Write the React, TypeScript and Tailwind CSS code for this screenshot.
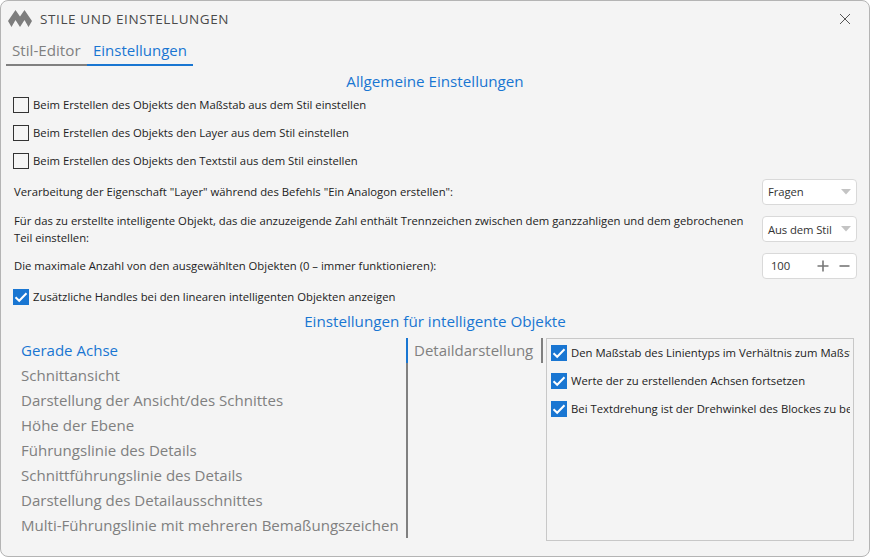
import React from "react";

const font = { fontFamily: '"Open Sans", "Noto Sans", sans-serif' };

function Check({ on, text }: { on?: boolean; text: string }) {
  return (
    <div className="flex items-center gap-[4px] h-[28px]">
      {on ? (
        <svg width="16" height="16" viewBox="0 0 16 16" className="shrink-0">
          <rect width="16" height="16" fill="#1976d2" />
          <path d="M2.5 8.2 L6.2 11.8 L13.5 4.2" fill="none" stroke="#fff" strokeWidth="2" />
        </svg>
      ) : (
        <div className="w-[16px] h-[16px] shrink-0 border border-[#333] bg-[#f5f5f5]" />
      )}
      <span className="text-[11.3px] text-[#222] whitespace-nowrap">{text}</span>
    </div>
  );
}

function Field({ children }: { children: React.ReactNode }) {
  return (
    <div className="w-[95px] h-[26px] shrink-0 bg-white border border-[#d9d9d9] rounded-[4px] flex items-center justify-between pl-[5px] pr-[5px] text-[11.3px] text-[#333] tracking-[-0.1px]">
      {children}
    </div>
  );
}

const Arrow = () => (
  <svg width="10" height="6" viewBox="0 0 10 6" className="shrink-0">
    <path d="M0 0 H10 L5 5.5 Z" fill="#c4c4c4" />
  </svg>
);

const list = [
  "Gerade Achse",
  "Schnittansicht",
  "Darstellung der Ansicht/des Schnittes",
  "Höhe der Ebene",
  "Führungslinie des Details",
  "Schnittführungslinie des Details",
  "Darstellung des Detailausschnittes",
  "Multi-Führungslinie mit mehreren Bemaßungszeichen",
];

export default function App() {
  return (
    <div style={font} className="w-[870px] h-[557px] bg-white overflow-hidden">
      <div className="w-full h-full flex flex-col bg-[#f4f4f4] border border-[#b4b4b4] rounded-[8px] overflow-hidden">
        <div className="h-[36px] shrink-0 flex items-center pl-[7px] pr-[18px]">
          <svg width="25" height="20" viewBox="0 0 25 20" className="shrink-0">
            <path d="M0 12 L7.5 1 L12 7.5 L16.5 1 L24 12 L20.5 18 L16.5 11 L12 18 L7.5 11 L3.5 18 Z" fill="#7d7d7d" />
          </svg>
          <span className="ml-[7px] text-[13.5px] tracking-[0.6px] text-[#4a4a4a]">STILE UND EINSTELLUNGEN</span>
          <svg width="12" height="12" viewBox="0 0 12 12" className="ml-auto">
            <path d="M1 1 L11 11 M11 1 L1 11" stroke="#555" strokeWidth="1" />
          </svg>
        </div>

        <div className="flex h-[29px] ml-[5px] shrink-0">
          <div className="w-[81px] pl-[6px] border-b-2 border-[#808080] text-[15.2px] leading-[26px] text-[#808080]">Stil-Editor</div>
          <div className="w-[106px] pl-[6px] border-b-2 border-[#1976d2] text-[15px] leading-[26px] text-[#1976d2]">Einstellungen</div>
        </div>

        <div className="text-center text-[15.2px] leading-[20px] mt-[5px] text-[#1976d2]">Allgemeine Einstellungen</div>

        <div className="pl-[12px] pr-[12px]">
          <Check text="Beim Erstellen des Objekts den Maßstab aus dem Stil einstellen" />
          <Check text="Beim Erstellen des Objekts den Layer aus dem Stil einstellen" />
          <Check text="Beim Erstellen des Objekts den Textstil aus dem Stil einstellen" />

          <div className="flex items-center justify-between h-[28px] mt-[3px] pl-[1px] text-[11.3px] text-[#222]">
            <span>Verarbeitung der Eigenschaft "Layer" während des Befehls "Ein Analogon erstellen":</span>
            <Field><span>Fragen</span><Arrow /></Field>
          </div>
          <div className="flex items-center justify-between h-[38px] mt-[4px] pl-[1px] text-[11.3px] leading-[17px] text-[#222]">
            <span className="w-[738px]">Für das zu erstellte intelligente Objekt, das die anzuzeigende Zahl enthält Trennzeichen zwischen dem ganzzahligen und dem gebrochenen Teil einstellen:</span>
            <Field><span>Aus dem Stil</span><Arrow /></Field>
          </div>
          <div className="flex items-center justify-between h-[28px] mt-[4px] pl-[1px] text-[11.3px] text-[#222]">
            <span>Die maximale Anzahl von den ausgewählten Objekten (0 – immer funktionieren):</span>
            <Field>
              <span className="pl-[3px]">100</span>
              <span className="flex items-center gap-[10px] pr-[1px]">
                <svg width="12" height="12" viewBox="0 0 12 12"><path d="M0.5 6 H11.5 M6 0.5 V11.5" stroke="#777" strokeWidth="1.6" /></svg>
                <svg width="11" height="12" viewBox="0 0 11 12"><path d="M0.5 6 H10.5" stroke="#777" strokeWidth="1.6" /></svg>
              </span>
            </Field>
          </div>
          <div className="mt-[3px]">
            <Check on text="Zusätzliche Handles bei den linearen intelligenten Objekten anzeigen" />
          </div>
        </div>

        <div className="text-center text-[15.2px] leading-[20px] text-[#1976d2]">Einstellungen für intelligente Objekte</div>

        <div className="flex ml-[20px] mt-[7px]">
          <div className="w-[385px] h-[200px] shrink-0 text-[#808080] text-[15.05px]">
            {list.map((t, i) => (
              <div key={t} className={`h-[25px] leading-[25px] whitespace-nowrap ${i === 0 ? "text-[#1976d2]" : ""}`}>{t}</div>
            ))}
          </div>
          <div className="w-[140px] h-[200px] shrink-0 border-l-2 border-[#808080] relative">
            <div className="absolute -left-[2px] top-0 w-[2px] h-[25px] bg-[#1976d2]" />
            <div className="w-[135px] h-[25px] pl-[6px] leading-[25px] text-[15px] text-[#808080] border-r-2 border-[#808080] whitespace-nowrap">Detaildarstellung</div>
          </div>
          <div className="w-[308px] h-[203px] shrink-0 border border-[#c8c8c8] pl-[4px] pr-[3px]">
            <div className="overflow-hidden">
              <Check on text="Den Maßstab des Linientyps im Verhältnis zum Maßstab des Objekts" />
              <Check on text="Werte der zu erstellenden Achsen fortsetzen" />
              <Check on text="Bei Textdrehung ist der Drehwinkel des Blockes zu berücksichtigen" />
            </div>
          </div>
        </div>
      </div>
    </div>
  );
}
